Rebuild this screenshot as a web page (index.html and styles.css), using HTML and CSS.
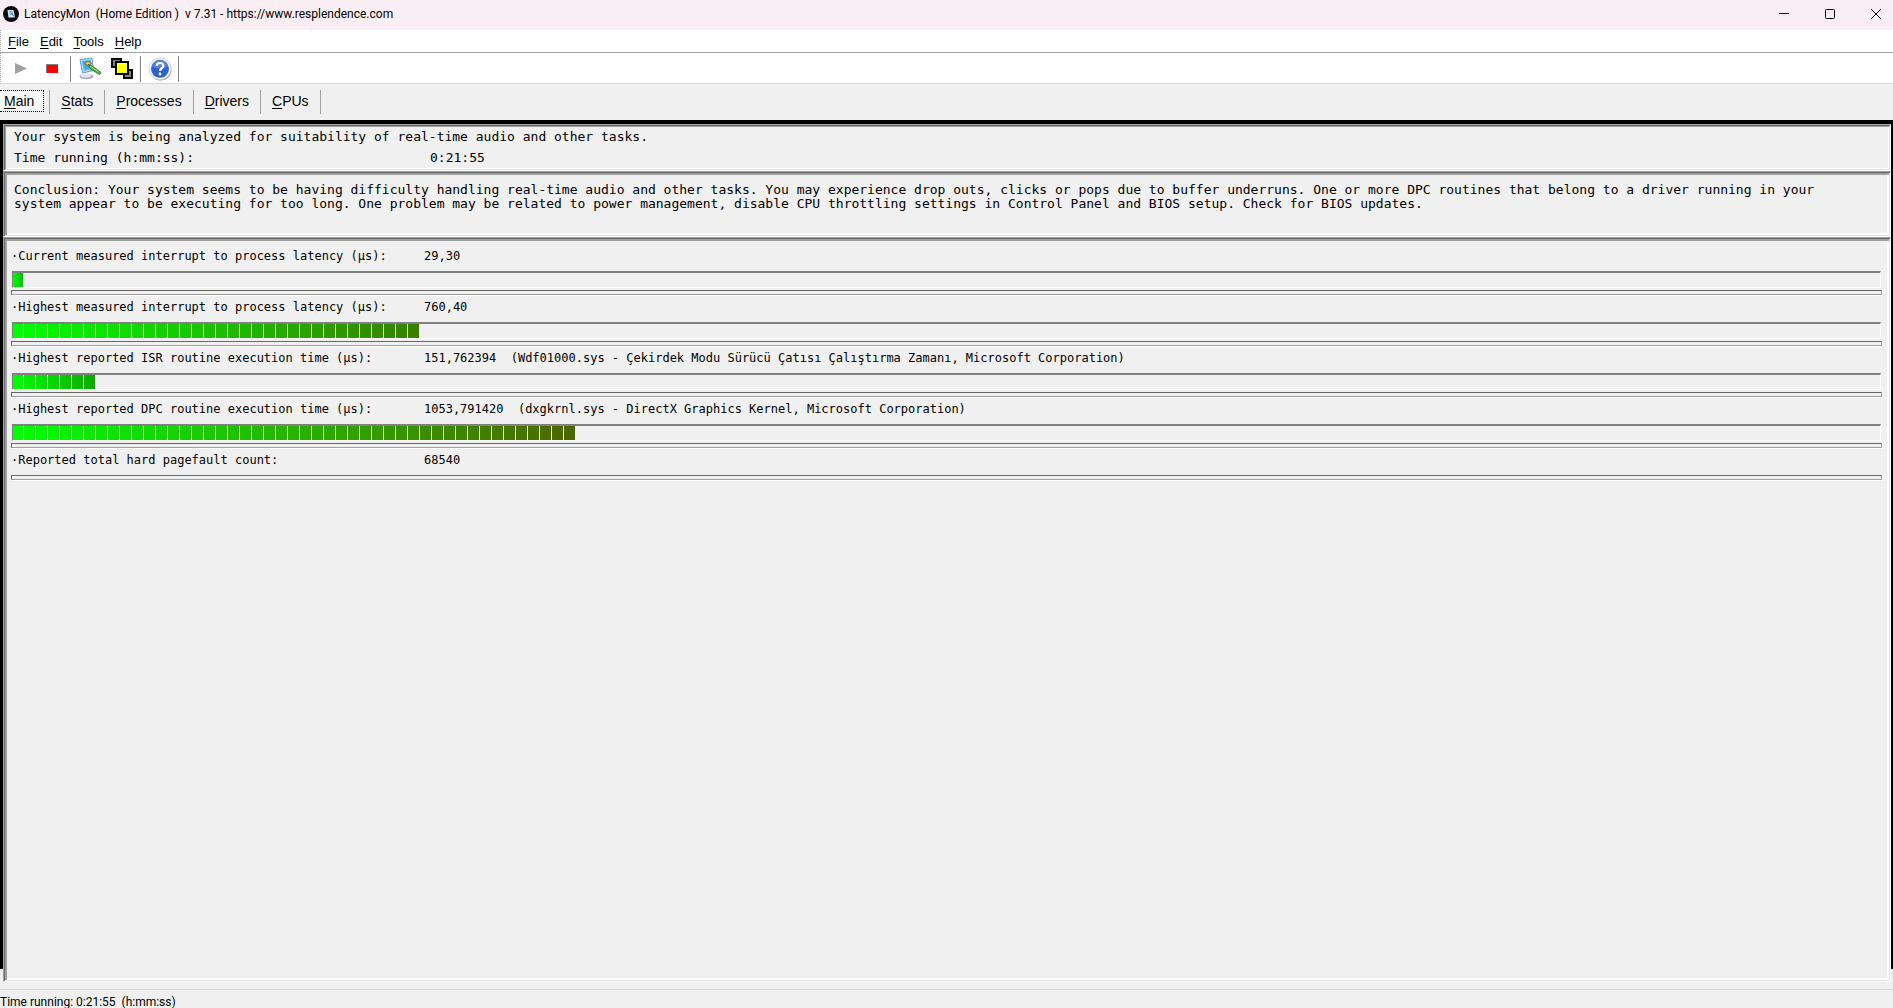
FILE: index.html
```
<!DOCTYPE html>
<html lang="en">
<head>
  <meta charset="utf-8">
  <title>LatencyMon</title>
  <link rel="stylesheet" href="styles.css">
</head>
<body>
  <header class="titlebar">
    <svg class="app-icon" width="16" height="16" viewBox="0 0 16 16">
      <circle cx="8" cy="8" r="8" fill="#0b0b0f"/>
      <path d="M4.500 4 H10.500 L12 11.500 H5.500 Z" fill="#d5e6f2"/>
      <path d="M6 5 H9.500 L10.500 9 H7 Z" fill="#7fb4dc"/>
      <path d="M8.500 7.500 L11 10.500" stroke="#3c6a8c"/>
    </svg>
    <span class="title">LatencyMon&nbsp; (Home Edition )&nbsp; v 7.31 - https://www.resplendence.com</span>
    <div class="window-buttons">
      <button type="button" aria-label="Minimize"><svg width="10" height="10"><path d="M0 4.500 H10" stroke="#000"/></svg></button>
      <button type="button" aria-label="Maximize"><svg width="10" height="10"><rect x=".5" y=".5" width="9" height="9" rx="1" fill="none" stroke="#000"/></svg></button>
      <button type="button" aria-label="Close"><svg width="10" height="10"><path d="M0 0 L10 10 M10 0 L0 10" stroke="#000"/></svg></button>
    </div>
  </header>

  <nav class="menubar">
    <button type="button"><u>F</u>ile</button>
    <button type="button"><u>E</u>dit</button>
    <button type="button"><u>T</u>ools</button>
    <button type="button"><u>H</u>elp</button>
  </nav>

  <div class="toolbar">
    <div class="tool-group">
      <button type="button" aria-label="Start"><svg width="24" height="24" viewBox="0 0 24 24"><path d="M7 6 V17 L19 11.500 Z" fill="#a0a0a0"/></svg></button>
      <button type="button" aria-label="Stop"><svg width="24" height="24" viewBox="0 0 24 24"><path d="M6 7 H18 V16 H6 Z" fill="#808080"/><path d="M7 8 H18 V16 H7 Z" fill="#f00"/></svg></button>
    </div>
    <div class="tool-group">
      <button type="button" aria-label="Options">
        <svg width="24" height="24" viewBox="0 0 24 24">
          <ellipse cx="8.500" cy="19.500" rx="7" ry="2.800" fill="#a9abc4"/>
          <ellipse cx="8" cy="18.500" rx="5.500" ry="2" fill="#e4e6f2"/>
          <path d="M2 2.500 L14 1 L15.500 13.500 L4.500 16 Z" fill="#b7d5f2" stroke="#6f9bd0"/>
          <path d="M4 4 L12.500 3 L13.800 12 L6 13.500 Z" fill="#46b1f2"/>
          <path d="M6.500 6.500 L10 4 L13.500 6.500 L10 9 Z" fill="#f5cb51" stroke="#805f18"/>
          <path d="M10 7.500 L14 9 L23 15.500 L21.500 17.500 L12.500 12 Z" fill="#4fb73e" stroke="#2c7a27"/>
          <path d="M12 9 L20.500 15" stroke="#a5e592"/>
        </svg>
      </button>
      <button type="button" aria-label="Windows">
        <svg width="24" height="24" viewBox="0 0 24 24">
          <defs>
            <pattern id="dots" width="2" height="2" patternUnits="userSpaceOnUse">
              <rect width="2" height="2" fill="#ff0"/>
              <path d="M0 0 h1 v1 h-1 z M1 1 h1 v1 h-1 z" fill="#ffff90"/>
            </pattern>
          </defs>
          <path d="M2 2 H11 V10 H2 Z M14 13 H22 V21 H14 Z" fill="#808080" stroke="#000" stroke-width="2"/>
          <path d="M6 5 H18 V17 H6 Z" fill="url(#dots)" stroke="#000" stroke-width="2"/>
        </svg>
      </button>
    </div>
    <div class="tool-group">
      <button type="button" aria-label="Help">
        <svg width="24" height="24" viewBox="0 0 24 24">
          <circle cx="12.500" cy="12.500" r="11" fill="#8c939f"/>
          <circle cx="12" cy="11.800" r="11" fill="#f3f5fa" stroke="#c0c5d0" stroke-width=".5"/>
          <circle cx="12" cy="11.800" r="9" fill="#2d63cd"/>
          <path d="M4 9 A8.500 8.500 0 0 1 20 9 Q12 14 4 9 Z" fill="#5585dd"/>
          <path d="M8.800 9 C8.800 5 15.300 5 15.300 9 C15.300 11.500 12 11 12 14" fill="none" stroke="#fff" stroke-width="2.200"/>
          <circle cx="12" cy="17" r="1.400" fill="#fff"/>
        </svg>
      </button>
    </div>
  </div>

  <nav class="tabs">
    <button type="button" class="active"><u>M</u>ain</button>
    <button type="button"><u>S</u>tats</button>
    <button type="button"><u>P</u>rocesses</button>
    <button type="button"><u>D</u>rivers</button>
    <button type="button"><u>C</u>PUs</button>
  </nav>

  <main class="content">
    <section class="panel summary">
      <p>Your system is being analyzed for suitability of real-time audio and other tasks.</p>
      <p class="running"><span>Time running (h:mm:ss):</span><span>0:21:55</span></p>
    </section>

    <section class="panel conclusion">
      <p>Conclusion: Your system seems to be having difficulty handling real-time audio and other tasks. You may experience drop outs, clicks or pops due to buffer underruns. One or more DPC routines that belong to a driver running in your system appear to be executing for too long. One problem may be related to power management, disable CPU throttling settings in Control Panel and BIOS setup. Check for BIOS updates.</p>
    </section>

    <section class="panel stats">
      <div class="stat">
        <div class="stat-text"><span class="name">·Current measured interrupt to process latency (µs):</span><span>29,30</span></div>
        <div class="meter"><div class="fill" style="width: 11px; --end: #00b800"></div></div>
        <hr>
      </div>
      <div class="stat">
        <div class="stat-text"><span class="name">·Highest measured interrupt to process latency (µs):</span><span>760,40</span></div>
        <div class="meter"><div class="fill" style="width: 406px; --end: #378000"></div></div>
        <hr>
      </div>
      <div class="stat">
        <div class="stat-text"><span class="name">·Highest reported ISR routine execution time (µs):</span><span>151,762394&nbsp; (Wdf01000.sys - Çekirdek Modu Sürücü Çatısı Çalıştırma Zamanı, Microsoft Corporation)</span></div>
        <div class="meter"><div class="fill" style="width: 82px; --end: #0baa00"></div></div>
        <hr>
      </div>
      <div class="stat">
        <div class="stat-text"><span class="name">·Highest reported DPC routine execution time (µs):</span><span>1053,791420&nbsp; (dxgkrnl.sys - DirectX Graphics Kernel, Microsoft Corporation)</span></div>
        <div class="meter"><div class="fill" style="width: 562px; --end: #4d6600"></div></div>
        <hr>
      </div>
      <div class="stat">
        <div class="stat-text"><span class="name">·Reported total hard pagefault count:</span><span>68540</span></div>
        <hr>
      </div>
    </section>
  </main>

  <footer class="statusbar">Time running: 0:21:55&nbsp; (h:mm:ss)</footer>
</body>
</html>
```
FILE: styles.css
```
* {
  box-sizing: border-box;
}

body {
  margin: 0;
  height: 100vh;
  display: flex;
  flex-direction: column;
  overflow: hidden;
  background: #f0f0f0;
  color: #000;
  font-family: "Liberation Sans", Arial, sans-serif;
}

p {
  margin: 0;
}

button {
  border: none;
  background: none;
  padding: 0;
  color: inherit;
  font: inherit;
}

svg {
  display: block;
}

u {
  text-underline-offset: 2px;
}

/* Title bar */
.titlebar {
  display: flex;
  align-items: center;
  height: 30px;
  flex: none;
  padding: 0 0 2px 3px;
  overflow: hidden;
  background: #f9eef3;
  font: 12px Roboto, sans-serif;
}

.title {
  margin-left: 5px;
}

.window-buttons {
  display: flex;
  height: 100%;
  margin-left: auto;
  margin-right: -6px;
}

.window-buttons button {
  width: 46px;
  display: flex;
  align-items: center;
  justify-content: center;
}

/* Menu and tools */
.menubar {
  display: flex;
  flex: none;
  gap: 11px;
  height: 23px;
  padding-left: 7px;
  border-bottom: 1px solid #a0a0a0;
  border-left: 1px dotted #b0b0b0;
  background: #fff;
  font-size: 13px;
}

.toolbar {
  display: flex;
  align-items: center;
  flex: none;
  height: 31px;
  padding: 2px 0 0 1px;
  border-bottom: 1px solid #d9d9d9;
  border-left: 1px dotted #b0b0b0;
  background: #fff;
}

.tool-group {
  display: flex;
  gap: 8px;
  padding: 1px 6px 1px 7px;
  border-right: 1px solid #808080;
}

.tool-group:first-child {
  padding-left: 6px;
}

/* Tabs */
.tabs {
  display: flex;
  align-items: flex-start;
  flex: none;
  height: 36px;
  padding-top: 6px;
  font-size: 14px;
}

.tabs button {
  height: 24px;
  padding: 0 11px 2px;
  border-right: 1px solid #a0a0a0;
}

.tabs .active {
  height: 22px;
  margin-right: 5px;
  padding: 0 9px 0 4px;
  border: 1px dotted #000;
  border-left: none;
  background: #f8f8f8;
}

.tabs .active + button {
  border-left: 1px solid #a0a0a0;
}

/* Panels */
.content {
  display: flex;
  flex-direction: column;
  flex: 1;
  padding: 4px 2px 0 3px;
  background: linear-gradient(#000, #000) no-repeat 0 0 / 100% calc(100% - 13px);
  font-family: "DejaVu Sans Mono", monospace;
  font-size: 13px;
}

.panel {
  border: 1px solid;
  border-color: #a0a0a0 #fff #fff #a0a0a0;
  background: #f0f0f0;
  box-shadow: inset 1px 1px #696969, inset -1px -1px #e3e3e3, inset 3px 3px #a0a0a0, inset -3px -3px #fff;
}

.summary {
  height: 47px;
  padding: 1px 10px;
  line-height: 21px;
  box-shadow: inset 1px 1px #696969, inset -1px -1px #e3e3e3, inset 2px 2px #a0a0a0, inset -2px -2px #fff;
}

.running {
  display: flex;
}

.running span:first-child {
  width: 416px;
}

.conclusion {
  height: 66px;
  padding: 11px 32px 0 10px;
  line-height: 14px;
}

.stats {
  flex: 1;
  padding: 8px 7px 0;
}

/* Meters */
.stat {
  font-size: 12px;
}

.stat:first-child {
  margin-bottom: 1px;
}

.stat-text {
  display: flex;
  height: 25px;
  line-height: 20px;
}

.name {
  width: 413px;
}

.meter {
  height: 17px;
  margin: 0 2px 2px 1px;
  border: 1px solid;
  border-width: 2px 1px 1px 1px;
  border-color: #808080 #fff #fff #808080;
}

.fill {
  height: 14px;
  background: repeating-linear-gradient(90deg, transparent 0 10px, #f0f0f0 10px 11px, transparent 11px 12px), linear-gradient(90deg, #0f0, var(--end));
}

hr {
  height: 5px;
  margin: 0 1px 2px 0;
  border: 1px solid;
  border-color: #696969 #a0a0a0 #a0a0a0 #696969;
  box-shadow: 1px 1px #fff;
}

/* Status bar */
.statusbar {
  flex: none;
  height: 19px;
  margin-top: 7px;
  border-top: 1px solid #d7d7d7;
  font: 12px/24px Roboto, sans-serif;
}
```
